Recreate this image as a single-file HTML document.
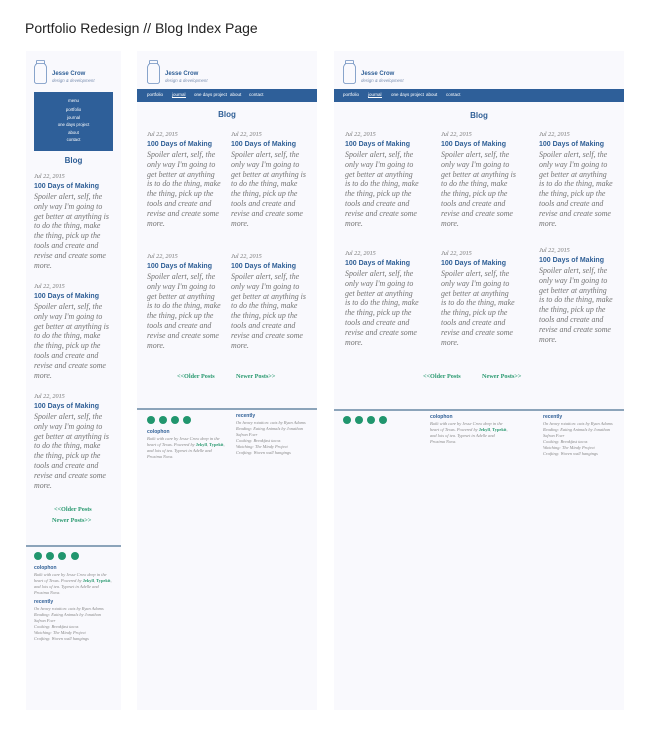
<!DOCTYPE html>
<html><head><meta charset="utf-8">
<style>
*{margin:0;padding:0;box-sizing:border-box}
body{width:650px;height:736px;background:#fff;position:relative;overflow:hidden;font-family:"Liberation Sans",sans-serif}
.a{position:absolute}
.panel{position:absolute;background:#f9f9fd}
.h1{left:25px;top:20px;font-size:14px;color:#222;white-space:nowrap}
.jar{position:absolute;width:13px;height:24px}
.jc{position:absolute;font-size:6px;font-weight:bold;color:#2f5f96;white-space:nowrap}
.jd{position:absolute;font-size:4.3px;font-style:italic;color:#7a8fb0;white-space:nowrap}
.nav{position:absolute;height:13px;background:#2e5f99}
.nav span{position:absolute;top:3px;font-size:4.5px;color:#fff;white-space:nowrap}
.blog{position:absolute;font-size:8px;font-weight:bold;color:#2f5f96;text-align:center}
.post{position:absolute;white-space:nowrap}
.post .d{font-family:"Liberation Serif",serif;font-style:italic;font-size:6.2px;color:#777;height:10px;line-height:10px}
.post .t{font-size:7px;font-weight:bold;color:#2f5f96;height:10px;line-height:10px}
.post .b{font-family:"Liberation Serif",serif;font-style:italic;font-size:7.9px;color:#747474;line-height:9.8px}
.pg{position:absolute;font-family:"Liberation Serif",serif;font-weight:bold;font-size:6.2px;color:#2a9a70;white-space:nowrap}
.line{position:absolute;height:1.5px;background:#8ca4ba}
.dot{position:absolute;width:8px;height:8px;border-radius:50%;background:#21966e}
.ft{position:absolute;white-space:nowrap}
.ft .h{font-size:5px;font-weight:bold;color:#2f5f96;line-height:7px}
.ft .x{font-family:"Liberation Serif",serif;font-style:italic;font-size:4.4px;color:#888;line-height:6px}
.ft .x b{color:#2a9a70;font-style:normal}
</style></head><body>
<div class="a h1">Portfolio Redesign // Blog Index Page</div>

<!-- Panel 1 -->
<div class="panel" style="left:26px;top:51px;width:95px;height:659px"></div>
<svg class="jar" style="left:34px;top:60px" viewBox="0 0 13 24"><rect x="2.5" y="0.5" width="8" height="3" rx="0.5" fill="none" stroke="#6d8fbf" stroke-width="0.8"/><path d="M3 3.5 Q0.5 5 0.5 8 V21 Q0.5 23.5 3 23.5 H10 Q12.5 23.5 12.5 21 V8 Q12.5 5 10 3.5" fill="none" stroke="#6d8fbf" stroke-width="0.8"/></svg>
<div class="jc" style="left:52px;top:71px">Jesse Crow</div>
<div class="jd" style="left:52px;top:78px">design &amp; development</div>
<div class="a" style="left:34px;top:92px;width:79px;height:59px;background:#2e5f99;color:#fff;text-align:center;font-size:4.3px;line-height:7.4px;padding-top:5px">menu<br><span style="display:block;height:2px"></span>portfolio<br>journal<br>one days project<br>about<br>contact</div>
<div class="blog" style="left:26px;top:156px;width:95px">Blog</div>

<div class="post" style="left:34px;top:172px"><div class="d">Jul 22, 2015</div><div class="t">100 Days of Making</div><div class="b">Spoiler alert, self, the<br>only way I'm going to<br>get better at anything is<br>to do the thing, make<br>the thing, pick up the<br>tools and create and<br>revise and create some<br>more.</div></div>
<div class="post" style="left:34px;top:282px"><div class="d">Jul 22, 2015</div><div class="t">100 Days of Making</div><div class="b">Spoiler alert, self, the<br>only way I'm going to<br>get better at anything is<br>to do the thing, make<br>the thing, pick up the<br>tools and create and<br>revise and create some<br>more.</div></div>
<div class="post" style="left:34px;top:392px"><div class="d">Jul 22, 2015</div><div class="t">100 Days of Making</div><div class="b">Spoiler alert, self, the<br>only way I'm going to<br>get better at anything is<br>to do the thing, make<br>the thing, pick up the<br>tools and create and<br>revise and create some<br>more.</div></div>
<div class="pg" style="left:54px;top:506px">&lt;&lt;Older Posts</div>
<div class="pg" style="left:52px;top:517px">Newer Posts&gt;&gt;</div>
<div class="line" style="left:26px;top:545px;width:95px"></div>
<div class="dot" style="left:34px;top:552px"></div><div class="dot" style="left:46px;top:552px"></div><div class="dot" style="left:58px;top:552px"></div><div class="dot" style="left:71px;top:552px"></div>
<div class="ft" style="left:34px;top:565px"><div class="h">colophon</div><div class="x">Built with care by Jesse Crow deep in the<br>heart of Texas. Powered by <b>Jekyll</b>, <b>Typekit</b>,<br>and lots of tea. Typeset in Adelle and<br>Proxima Nova.</div>
<div class="h" style="margin-top:3px">recently</div><div class="x">On heavy rotation: cats by Ryan Adams<br>Reading: Eating Animals by Jonathan<br>Safran Foer<br>Cooking: Breakfast tacos<br>Watching: The Mindy Project<br>Crafting: Woven wall hangings</div></div>

<!-- Panel 2 -->
<div class="panel" style="left:137px;top:51px;width:180px;height:659px"></div>
<svg class="jar" style="left:147px;top:60px" viewBox="0 0 13 24"><rect x="2.5" y="0.5" width="8" height="3" rx="0.5" fill="none" stroke="#6d8fbf" stroke-width="0.8"/><path d="M3 3.5 Q0.5 5 0.5 8 V21 Q0.5 23.5 3 23.5 H10 Q12.5 23.5 12.5 21 V8 Q12.5 5 10 3.5" fill="none" stroke="#6d8fbf" stroke-width="0.8"/></svg>
<div class="jc" style="left:165px;top:71px">Jesse Crow</div>
<div class="jd" style="left:165px;top:78px">design &amp; development</div>
<div class="nav" style="left:137px;top:89px;width:180px"><span style="left:10px">portfolio</span><span style="left:35px;border-bottom:0.6px solid #fff">journal</span><span style="left:57px">one days project</span><span style="left:93px">about</span><span style="left:112px">contact</span></div>
<div class="blog" style="left:137px;top:110px;width:180px">Blog</div>

<div class="post" style="left:147px;top:130px"><div class="d">Jul 22, 2015</div><div class="t">100 Days of Making</div><div class="b">Spoiler alert, self, the<br>only way I'm going to<br>get better at anything<br>is to do the thing, make<br>the thing, pick up the<br>tools and create and<br>revise and create some<br>more.</div></div>
<div class="post" style="left:231px;top:130px"><div class="d">Jul 22, 2015</div><div class="t">100 Days of Making</div><div class="b">Spoiler alert, self, the<br>only way I'm going to<br>get better at anything is<br>to do the thing, make<br>the thing, pick up the<br>tools and create and<br>revise and create some<br>more.</div></div>
<div class="post" style="left:147px;top:252px"><div class="d">Jul 22, 2015</div><div class="t">100 Days of Making</div><div class="b">Spoiler alert, self, the<br>only way I'm going to<br>get better at anything<br>is to do the thing, make<br>the thing, pick up the<br>tools and create and<br>revise and create some<br>more.</div></div>
<div class="post" style="left:231px;top:252px"><div class="d">Jul 22, 2015</div><div class="t">100 Days of Making</div><div class="b">Spoiler alert, self, the<br>only way I'm going to<br>get better at anything is<br>to do the thing, make<br>the thing, pick up the<br>tools and create and<br>revise and create some<br>more.</div></div>
<div class="pg" style="left:177px;top:373px">&lt;&lt;Older Posts</div>
<div class="pg" style="left:236px;top:373px">Newer Posts&gt;&gt;</div>
<div class="line" style="left:137px;top:408px;width:180px"></div>
<div class="dot" style="left:147px;top:416px"></div><div class="dot" style="left:159px;top:416px"></div><div class="dot" style="left:171px;top:416px"></div><div class="dot" style="left:183px;top:416px"></div>
<div class="ft" style="left:147px;top:429px"><div class="h">colophon</div><div class="x">Built with care by Jesse Crow deep in the<br>heart of Texas. Powered by <b>Jekyll</b>, <b>Typekit</b>,<br>and lots of tea. Typeset in Adelle and<br>Proxima Nova.</div></div>
<div class="ft" style="left:236px;top:413px"><div class="h">recently</div><div class="x">On heavy rotation: cats by Ryan Adams<br>Reading: Eating Animals by Jonathan<br>Safran Foer<br>Cooking: Breakfast tacos<br>Watching: The Mindy Project<br>Crafting: Woven wall hangings</div></div>

<!-- Panel 3 -->
<div class="panel" style="left:334px;top:51px;width:290px;height:659px"></div>
<svg class="jar" style="left:343px;top:60px" viewBox="0 0 13 24"><rect x="2.5" y="0.5" width="8" height="3" rx="0.5" fill="none" stroke="#6d8fbf" stroke-width="0.8"/><path d="M3 3.5 Q0.5 5 0.5 8 V21 Q0.5 23.5 3 23.5 H10 Q12.5 23.5 12.5 21 V8 Q12.5 5 10 3.5" fill="none" stroke="#6d8fbf" stroke-width="0.8"/></svg>
<div class="jc" style="left:361px;top:71px">Jesse Crow</div>
<div class="jd" style="left:361px;top:78px">design &amp; development</div>
<div class="nav" style="left:334px;top:89px;width:290px"><span style="left:9px">portfolio</span><span style="left:34px;border-bottom:0.6px solid #fff">journal</span><span style="left:57px">one days project</span><span style="left:92px">about</span><span style="left:112px">contact</span></div>
<div class="blog" style="left:334px;top:111px;width:290px">Blog</div>

<div class="post" style="left:345px;top:130px"><div class="d">Jul 22, 2015</div><div class="t">100 Days of Making</div><div class="b">Spoiler alert, self, the<br>only way I'm going to<br>get better at anything<br>is to do the thing, make<br>the thing, pick up the<br>tools and create and<br>revise and create some<br>more.</div></div>
<div class="post" style="left:441px;top:130px"><div class="d">Jul 22, 2015</div><div class="t">100 Days of Making</div><div class="b">Spoiler alert, self, the<br>only way I'm going to<br>get better at anything is<br>to do the thing, make<br>the thing, pick up the<br>tools and create and<br>revise and create some<br>more.</div></div>
<div class="post" style="left:539px;top:130px"><div class="d">Jul 22, 2015</div><div class="t">100 Days of Making</div><div class="b">Spoiler alert, self, the<br>only way I'm going to<br>get better at anything<br>is to do the thing, make<br>the thing, pick up the<br>tools and create and<br>revise and create some<br>more.</div></div>
<div class="post" style="left:345px;top:249px"><div class="d">Jul 22, 2015</div><div class="t">100 Days of Making</div><div class="b">Spoiler alert, self, the<br>only way I'm going to<br>get better at anything<br>is to do the thing, make<br>the thing, pick up the<br>tools and create and<br>revise and create some<br>more.</div></div>
<div class="post" style="left:441px;top:249px"><div class="d">Jul 22, 2015</div><div class="t">100 Days of Making</div><div class="b">Spoiler alert, self, the<br>only way I'm going to<br>get better at anything<br>is to do the thing, make<br>the thing, pick up the<br>tools and create and<br>revise and create some<br>more.</div></div>
<div class="post" style="left:539px;top:246px"><div class="d">Jul 22, 2015</div><div class="t">100 Days of Making</div><div class="b">Spoiler alert, self, the<br>only way I'm going to<br>get better at anything<br>is to do the thing, make<br>the thing, pick up the<br>tools and create and<br>revise and create some<br>more.</div></div>
<div class="pg" style="left:423px;top:373px">&lt;&lt;Older Posts</div>
<div class="pg" style="left:482px;top:373px">Newer Posts&gt;&gt;</div>
<div class="line" style="left:334px;top:409px;width:290px"></div>
<div class="dot" style="left:343px;top:416px"></div><div class="dot" style="left:355px;top:416px"></div><div class="dot" style="left:367px;top:416px"></div><div class="dot" style="left:379px;top:416px"></div>
<div class="ft" style="left:430px;top:414px"><div class="h">colophon</div><div class="x">Built with care by Jesse Crow deep in the<br>heart of Texas. Powered by <b>Jekyll</b>, <b>Typekit</b>,<br>and lots of tea. Typeset in Adelle and<br>Proxima Nova.</div></div>
<div class="ft" style="left:543px;top:414px"><div class="h">recently</div><div class="x">On heavy rotation: cats by Ryan Adams<br>Reading: Eating Animals by Jonathan<br>Safran Foer<br>Cooking: Breakfast tacos<br>Watching: The Mindy Project<br>Crafting: Woven wall hangings</div></div>
</body></html>
